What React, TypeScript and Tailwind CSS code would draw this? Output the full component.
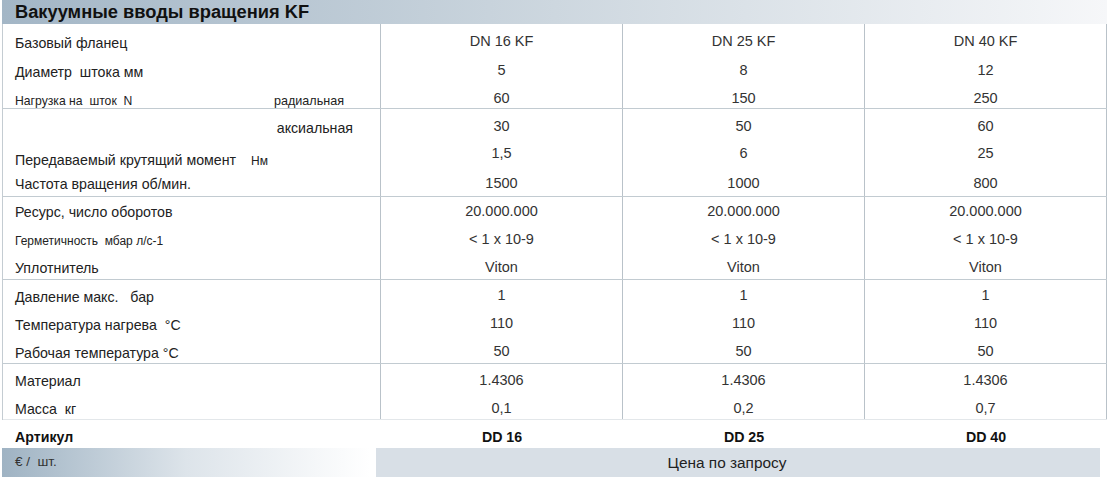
import React from 'react';

type Row = {
  h: string;
  label: React.ReactNode;
  lc?: string;
  vals: string[];
  vc?: string;
};

type Section = {
  h: string;
  pt: string;
  last?: boolean;
  rows: Row[];
};

const sections: Section[] = [
  {
    h: 'h-[85px]',
    pt: 'pt-[4px]',
    rows: [
      { h: 'h-[28px]', label: <span>Базовый фланец</span>, lc: 'pt-[4px]', vals: ['DN 16 KF', 'DN 25 KF', 'DN 40 KF'] },
      { h: 'h-[29px]', label: <span className="whitespace-pre">Диаметр  штока мм</span>, lc: 'pt-[4px]', vals: ['5', '8', '12'] },
      {
        h: 'h-[28px]',
        label: (
          <div className="flex w-full justify-between pr-[36px] text-[12.2px]">
            <span className="whitespace-pre">Нагрузка на  шток  N</span>
            <span className="text-[12.6px]">радиальная</span>
          </div>
        ),
        lc: 'pt-[4px]',
        vals: ['60', '150', '250'],
      },
    ],
  },
  {
    h: 'h-[88px]',
    pt: 'pt-[4px]',
    rows: [
      {
        h: 'h-[28px]',
        label: <div className="w-full pr-[27px] text-right">аксиальная</div>,
        lc: 'pt-[4px]',
        vals: ['30', '50', '60'],
      },
      {
        h: 'h-[26px]',
        label: (
          <span>
            Передаваемый крутящий момент<span className="ml-[15px] text-[12px]">Нм</span>
          </span>
        ),
        lc: 'pt-[14px]',
        vals: ['1,5', '6', '25'],
      },
      { h: 'h-[30px]', label: <span>Частота вращения об/мин.</span>, lc: 'pt-[6px]', vals: ['1500', '1000', '800'], vc: 'pt-[4px]' },
    ],
  },
  {
    h: 'h-[83px]',
    pt: 'pt-[1px]',
    rows: [
      { h: 'h-[28px]', label: <span>Ресурс, число оборотов</span>, lc: 'pt-[2px]', vals: ['20.000.000', '20.000.000', '20.000.000'] },
      {
        h: 'h-[28px]',
        label: <span className="whitespace-pre text-[12px]">Герметичность  мбар л/с-1</span>,
        lc: 'pt-[2px]',
        vals: ['< 1 x 10-9', '< 1 x 10-9', '< 1 x 10-9'],
      },
      { h: 'h-[28px]', label: <span>Уплотнитель</span>, lc: 'pt-[2px]', vals: ['Viton', 'Viton', 'Viton'] },
    ],
  },
  {
    h: 'h-[84px]',
    pt: 'pt-[2px]',
    rows: [
      { h: 'h-[28px]', label: <span className="whitespace-pre">Давление макс.   бар</span>, lc: 'pt-[4px]', vals: ['1', '1', '1'] },
      { h: 'h-[28px]', label: <span className="whitespace-pre">Температура нагрева  °C</span>, lc: 'pt-[4px]', vals: ['110', '110', '110'] },
      { h: 'h-[28px]', label: <span>Рабочая температура °C</span>, lc: 'pt-[4px]', vals: ['50', '50', '50'] },
    ],
  },
  {
    h: 'h-[56px]',
    pt: 'pt-[3px]',
    last: true,
    rows: [
      { h: 'h-[28px]', label: <span>Материал</span>, lc: 'pt-[2px]', vals: ['1.4306', '1.4306', '1.4306'] },
      { h: 'h-[28px]', label: <span className="whitespace-pre">Масса  кг</span>, lc: 'pt-[2px]', vals: ['0,1', '0,2', '0,7'] },
    ],
  },
];

const App: React.FC = () => {
  return (
    <div className="w-[1110px] h-[491px] bg-white font-['Liberation_Sans',Arial,sans-serif] text-[14.2px] text-[#222]">
      <div className="ml-[2px] w-[1105px] h-[24px] bg-gradient-to-r from-[#a3b6c6] via-[#cdd7df] to-[#f6f7f9] pl-[13px] text-[18.3px] font-bold leading-[24px] text-[#111]">
        Вакуумные вводы вращения KF
      </div>

      <div className="ml-[2px] w-[1105px] border-l border-[#c4ccd2]">
        {sections.map((s, si) => (
          <div
            key={si}
            className={`flex ${s.h} ${s.last ? 'border-b border-[#e3e7ea]' : 'border-b border-[#c2cbd1]'}`}
          >
            <div className={`w-[378px] shrink-0 border-r border-[#b9c2c9] flex flex-col ${s.pt}`}>
              {s.rows.map((r, ri) => (
                <div key={ri} className={`${r.h} shrink-0 flex items-center pl-[12px] ${r.lc ?? ''}`}>
                  {r.label}
                </div>
              ))}
            </div>
            {[0, 1, 2].map((ci) => (
              <div key={ci} className={`w-[242px] shrink-0 border-r border-[#b9c2c9] flex flex-col text-[14.5px] text-[#333] ${s.pt}`}>
                {s.rows.map((r, ri) => (
                  <div key={ri} className={`${r.h} shrink-0 flex items-center justify-center ${r.vc ?? ''}`}>
                    {r.vals[ci]}
                  </div>
                ))}
              </div>
            ))}
          </div>
        ))}
      </div>

      <div className="ml-[2px] w-[1105px] h-[28px] flex items-center font-bold pt-[8px] text-[#111]">
        <div className="w-[379px] pl-[13px]">Артикул</div>
        <div className="w-[242px] text-center">DD 16</div>
        <div className="w-[242px] text-center">DD 25</div>
        <div className="w-[242px] text-center">DD 40</div>
      </div>

      <div className="ml-[2px] flex h-[29px] gap-[6px]">
        <div className="w-[368px] bg-gradient-to-r from-[#9fb3c3] via-[#dde4ea] to-white flex items-center pl-[13px] text-[13.5px] text-[#333]">
          <span className="whitespace-pre">€ /  шт.</span>
        </div>
        <div className="w-[724px] bg-[#d8dfe6] flex items-center justify-center pr-[22px] text-[15.4px] text-[#222]">
          Цена по запросу
        </div>
      </div>
    </div>
  );
};

export default App;
